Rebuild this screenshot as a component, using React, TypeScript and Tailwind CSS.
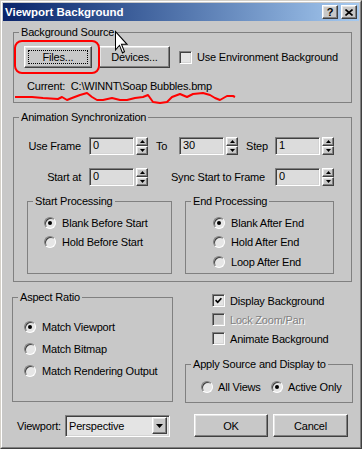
import type { ReactNode } from 'react'

const raised =
  'border border-t-white border-l-white border-r-[#404040] border-b-[#404040] shadow-[inset_-1px_-1px_0_#808080,inset_1px_1px_0_#e4e4e4]'
const sunken =
  'border border-t-[#808080] border-l-[#808080] border-r-white border-b-white shadow-[inset_1px_1px_0_#404040,inset_-1px_-1px_0_#d4d4d4]'

function Group({ title, className = '', children }: { title: string; className?: string; children?: ReactNode }) {
  return (
    <fieldset className={`border border-[#808080] ${className}`}>
      <legend className="ml-[5px] px-[2px] leading-[12px]">{title}</legend>
      {children}
    </fieldset>
  )
}

function Button({ className = '', focused = false, children }: { className?: string; focused?: boolean; children: ReactNode }) {
  return (
    <div className={`relative flex items-center justify-center bg-[#c8c8c8] ${raised} ${className}`}>
      {focused && <div className="absolute inset-[3px] border border-dotted border-black" />}
      <span>{children}</span>
    </div>
  )
}

function Spinner() {
  return (
    <div className="flex h-[18px] w-[12px] flex-col">
      <div className={`flex h-[9px] items-center justify-center bg-[#c8c8c8] ${raised}`}>
        <svg width="5" height="3" viewBox="0 0 5 3">
          <path d="M2.5 0 5 3H0z" fill="#000" />
        </svg>
      </div>
      <div className={`flex h-[9px] items-center justify-center bg-[#c8c8c8] ${raised}`}>
        <svg width="5" height="3" viewBox="0 0 5 3">
          <path d="M0 0h5L2.5 3z" fill="#000" />
        </svg>
      </div>
    </div>
  )
}

function SpinField({ value }: { value: string }) {
  return (
    <div className="flex items-center">
      <div className={`h-[18px] w-[45px] bg-[#dcdcdc] pl-[3px] leading-[14px] ${sunken}`}>{value}</div>
      <div className="ml-[2px]">
        <Spinner />
      </div>
    </div>
  )
}

function Radio({ checked = false }: { checked?: boolean }) {
  return (
    <div className="flex h-[12px] w-[12px] shrink-0 items-center justify-center rounded-full border border-t-[#808080] border-l-[#808080] border-r-white border-b-white bg-[#e6e6e6] shadow-[inset_1px_1px_0_#404040]">
      {checked && <div className="h-[4px] w-[4px] rounded-full bg-black" />}
    </div>
  )
}

function RadioRow({ label, checked = false, className = 'h-[19px]' }: { label: string; checked?: boolean; className?: string }) {
  return (
    <div className={`flex items-center ${className}`}>
      <Radio checked={checked} />
      <span className="ml-[6px]">{label}</span>
    </div>
  )
}

function Check({ checked = false, disabled = false }: { checked?: boolean; disabled?: boolean }) {
  return (
    <div className={`flex h-[13px] w-[13px] shrink-0 items-center justify-center ${sunken} ${disabled ? 'bg-[#c8c8c8]' : 'bg-[#e4e4e4]'}`}>
      {checked && (
        <svg width="7" height="7" viewBox="0 0 7 7">
          <path d="M0.6 3.2 2.7 5.3 6.4 1.2" fill="none" stroke="#000" strokeWidth="1.7" />
        </svg>
      )}
    </div>
  )
}

function CheckRow({ label, checked = false, disabled = false }: { label: string; checked?: boolean; disabled?: boolean }) {
  return (
    <div className="flex h-[19px] items-center">
      <Check checked={checked} disabled={disabled} />
      <span className={`ml-[5px] ${disabled ? 'text-[#808080] [text-shadow:1px_1px_0_#ffffff]' : ''}`}>{label}</span>
    </div>
  )
}

export default function App() {
  return (
    <div className="relative h-[449px] w-[362px] border border-t-[#d4d0c8] border-l-[#d4d0c8] border-r-[#404040] border-b-[#404040] text-[11px] leading-[14px] tracking-[-0.2px] text-black [font-family:'Liberation_Sans',Arial,sans-serif]">
      <div className="flex h-full flex-col border border-t-white border-l-white border-r-[#808080] border-b-[#808080] bg-[#c8c8c8] p-px">
        {/* title bar */}
        <div className="flex h-[18px] shrink-0 items-center bg-linear-to-r from-[#0a246a] to-[#a6caf0] px-[2px]">
          <span className="text-[11.5px] font-bold tracking-normal text-white">Viewport Background</span>
          <div className="ml-auto flex gap-[3px]">
            <div className={`flex h-[14px] w-[16px] items-center justify-center bg-[#c8c8c8] text-[11px] font-bold leading-none ${raised}`}>
              ?
            </div>
            <div className={`flex h-[14px] w-[16px] items-center justify-center bg-[#c8c8c8] ${raised}`}>
              <svg width="8" height="7" viewBox="0 0 8 7">
                <path d="M0.5 0.5 7.5 6.5M7.5 0.5 0.5 6.5" stroke="#000" strokeWidth="1.6" />
              </svg>
            </div>
          </div>
        </div>

        <div className="flex flex-col">
          <Group title="Background Source" className="ml-[10px] mt-[5px] h-[77px] w-[339px]">
            <div className="mt-[8px] flex items-center pl-[10px]">
              <Button className="h-[22px] w-[68px]" focused>
                Files...
              </Button>
              <Button className="ml-[7px] h-[22px] w-[71px]">Devices...</Button>
              <div className="ml-[9px]">
                <Check />
              </div>
              <span className="ml-[5px]">Use Environment Background</span>
            </div>
            <div className="mt-[11px] whitespace-pre pl-[13px]">Current:  {'C:\\WINNT\\Soap Bubbles.bmp'}</div>
          </Group>

          <Group title="Animation Synchronization" className="ml-[10px] mt-[8px] h-[171px] w-[339px]">
            <div className="mt-[14px] flex items-center">
              <span className="w-[67px] text-right">Use Frame</span>
              <div className="ml-[8px]">
                <SpinField value="0" />
              </div>
              <span className="ml-[8px] w-[23px]">To</span>
              <SpinField value="30" />
              <span className="ml-[8px] w-[29px]">Step</span>
              <SpinField value="1" />
            </div>
            <div className="mt-[13px] flex items-center">
              <span className="w-[67px] text-right">Start at</span>
              <div className="ml-[8px]">
                <SpinField value="0" />
              </div>
              <span className="w-[127px] pr-[10px] text-right">Sync Start to Frame</span>
              <SpinField value="0" />
            </div>
            <div className="mt-[9px] flex">
              <Group title="Start Processing" className="ml-[13px] h-[79px] w-[145px]">
                <div className="mt-[6px] pl-[16px]">
                  <RadioRow checked label="Blank Before Start" />
                  <RadioRow label="Hold Before Start" />
                </div>
              </Group>
              <Group title="End Processing" className="ml-[13px] h-[79px] w-[149px]">
                <div className="mt-[6px] pl-[27px]">
                  <RadioRow checked label="Blank After End" />
                  <RadioRow label="Hold After End" className="h-[20px]" />
                  <RadioRow label="Loop After End" />
                </div>
              </Group>
            </div>
          </Group>

          <div className="mt-[9px] flex">
            <Group title="Aspect Ratio" className="ml-[9px] h-[111px] w-[161px]">
              <div className="mt-[12px] pl-[11px]">
                <RadioRow checked label="Match Viewport" className="h-[23px]" />
                <RadioRow label="Match Bitmap" className="h-[22px]" />
                <RadioRow label="Match Rendering Output" className="h-[22px]" />
              </div>
            </Group>
            <div className="ml-[12px] flex w-[168px] flex-col">
              <div className="pl-[27px]">
                <CheckRow checked label="Display Background" />
                <CheckRow disabled label="Lock Zoom/Pan" />
                <CheckRow label="Animate Background" />
              </div>
              <Group title="Apply Source and Display to" className="mt-[10px] h-[45px] w-[168px]">
                <div className="mt-[7px] flex h-[19px] items-center pl-[15px]">
                  <div className="flex w-[70px] items-center">
                    <Radio />
                    <span className="ml-[5px]">All Views</span>
                  </div>
                  <Radio checked />
                  <span className="ml-[5px]">Active Only</span>
                </div>
              </Group>
            </div>
          </div>

          <div className="mt-[11px] flex items-center">
            <span className="ml-[14px] w-[48px]">Viewport:</span>
            <div className={`flex h-[22px] w-[105px] items-center bg-[#e4e4e4] pl-[3px] pr-[2px] ${sunken}`}>
              <span className="flex-1">Perspective</span>
              <div className={`flex h-[17px] w-[15px] items-center justify-center bg-[#c8c8c8] ${raised}`}>
                <svg width="7" height="4" viewBox="0 0 7 4">
                  <path d="M0 0h7L3.5 4z" fill="#000" />
                </svg>
              </div>
            </div>
            <Button className="ml-[24px] h-[23px] w-[74px]">OK</Button>
            <Button className="ml-[5px] h-[23px] w-[75px]">Cancel</Button>
          </div>
        </div>
      </div>

      {/* red markup and mouse pointer drawn over the dialog */}
      <svg className="pointer-events-none absolute -left-px -top-px" width="362" height="449">
        <rect x="15" y="41" width="84" height="32" rx="7" fill="none" stroke="#ff0000" strokeWidth="2" />
        <polyline
          points="15,97 32,97 43,98 58,99 62,97 67,100 72,98 80,95 87,93 92,97 97,100 103,100 112,98 120,100 127,100 135,98 143,97 148,95 153,102 160,103 167,102 172,97 180,94 187,97 193,94 203,93 210,95 215,98 220,100 227,96 233,96 235,97"
          fill="none"
          stroke="#ff0000"
          strokeWidth="2"
          strokeLinejoin="round"
        />
        <path
          transform="translate(115 31) scale(1 1.15)"
          d="M0.5 0.5v16l4-4 3 6.5 2-1-3-6.5h5.5z"
          fill="#fff"
          stroke="#000"
        />
      </svg>
    </div>
  )
}
